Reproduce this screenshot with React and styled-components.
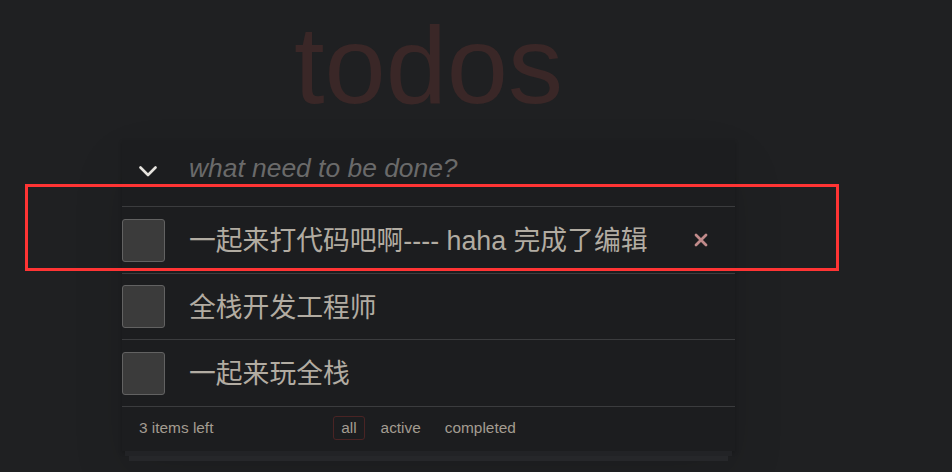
import React from "react"
import styled, { createGlobalStyle } from "styled-components"

const GlobalStyle = createGlobalStyle`
    html, body {
        margin: 0;
        padding: 0;
        background: #1f2022;
        font-family: "Liberation Sans", "Noto Sans CJK SC", sans-serif;
    }
`

const Page = styled.div`
    position: relative;
    width: 952px;
    height: 472px;
    overflow: hidden;
`

const Title = styled.h1`
    margin: 0 0 15px 122px;
    padding-top: 4px;
    width: 613px;
    text-align: center;
    font-size: 110px;
    font-weight: 400;
    line-height: 121px;
    color: #3a2727;
`

const TodoApp = styled.section`
    width: 613px;
    margin-left: 122px;
    background: #1c1d1f;
    box-shadow: 0 2px 4px rgba(0, 0, 0, 0.2), 0 25px 50px rgba(0, 0, 0, 0.1);
`

const Header = styled.div`
    display: flex;
    align-items: flex-start;
    height: 66px;
    box-sizing: border-box;
    padding-top: 13px;
`

const ToggleAll = styled.div`
    width: 18px;
    height: 11px;
    margin: 13px 32px 0 17px;
    display: flex;
`

const NewTodo = styled.div`
    font-size: 26.4px;
    font-style: italic;
    color: #6a6a6a;
    line-height: 30px;
`

const Row = styled.div`
    display: flex;
    align-items: center;
    height: ${props => props.h || 66}px;
    border-top: 1px solid #3b3c3e;
`

const Check = styled.div`
    width: 43px;
    height: 43px;
    box-sizing: border-box;
    background: #3b3b3b;
    border: 1px solid #626262;
    border-radius: 3px;
    flex-shrink: 0;
`

const Label = styled.div`
    margin-left: 24px;
    padding-bottom: 3px;
    font-size: 26.8px;
    color: #b2aca2;
    white-space: nowrap;
`

const Destroy = styled.div`
    margin-left: auto;
    margin-right: 27px;
    width: 14px;
    height: 14px;
    display: flex;
`

const Footer = styled.div`
    display: grid;
    grid-template-columns: 1fr auto 1fr;
    align-items: center;
    height: 45px;
    box-sizing: border-box;
    padding-bottom: 2px;
    border-top: 1px solid #3b3c3e;
    font-size: 15.4px;
    color: #a39c91;
`

const Count = styled.span`
    padding-left: 17px;
`

const Filters = styled.div`
    display: flex;
`

const Filter = styled.span`
    margin: 0 3.3px;
    padding: 3px 7.7px;
    border: 1px solid ${props => (props.selected ? "#4a2424" : "transparent")};
    border-radius: 3px;
    line-height: 16px;
`

const Stack = styled.div`
    height: 5px;
    background: ${props => props.color};
    margin-left: ${props => 122 + props.inset}px;
    width: ${props => 613 - props.inset * 2}px;
`

const Highlight = styled.div`
    position: absolute;
    left: 25px;
    top: 184px;
    width: 814px;
    height: 87px;
    box-sizing: border-box;
    border: 3px solid #ff3434;
`

const todos = [
    { id: 1, title: "一起来打代码吧啊---- haha 完成了编辑", removable: true, h: 66 },
    { id: 2, title: "全栈开发工程师", h: 65 },
    { id: 3, title: "一起来玩全栈", h: 66 },
]

export default function App() {
    return (
        <Page>
            <GlobalStyle />
            <Title>todos</Title>
            <TodoApp>
                <Header>
                    <ToggleAll>
                        <svg width="18" height="11" viewBox="0 0 18 11">
                            <polyline points="1.5,1.5 9,9 16.5,1.5" fill="none" stroke="#e6e3de" strokeWidth="2.6" strokeLinecap="round" strokeLinejoin="round" />
                        </svg>
                    </ToggleAll>
                    <NewTodo>what need to be done?</NewTodo>
                </Header>
                {todos.map(todo => (
                    <Row key={todo.id} h={todo.h}>
                        <Check />
                        <Label>{todo.title}</Label>
                        {todo.removable && (
                            <Destroy>
                                <svg width="14" height="14" viewBox="0 0 14 14">
                                    <path d="M2 2 L12 12 M12 2 L2 12" stroke="#c08a8a" strokeWidth="2.8" strokeLinecap="round" />
                                </svg>
                            </Destroy>
                        )}
                    </Row>
                ))}
                <Footer>
                    <Count>3 items left</Count>
                    <Filters>
                        <Filter selected>all</Filter>
                        <Filter>active</Filter>
                        <Filter>completed</Filter>
                    </Filters>
                    <span />
                </Footer>
            </TodoApp>
            <Stack inset={3} color="#222326" />
            <Stack inset={7} color="#26272a" />
            <Highlight />
        </Page>
    )
}
